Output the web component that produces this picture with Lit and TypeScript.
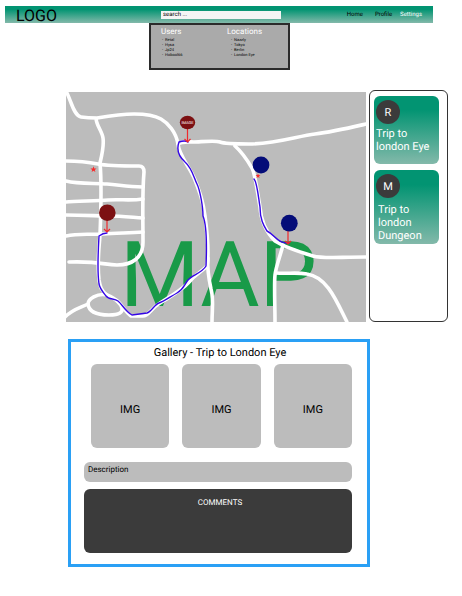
import { LitElement, html, css, svg } from "lit";
import { customElement } from "lit/decorators.js";

const roads: string[] = [
  "M67 93C71 101 74 116 81 117S90 118 97 118C109 116 122 114 134 114S154 115 161 119S176 132 178 144C179 156 190 167 195 180S203 201 205 216S209 255 207 266C200 273 195 275 190 281S170 297 160 303S149 316 143 316H131C125 312 122 304 116 300S107 295 107 295C101 291 100 286 99 280C97 262 99 250 100 235C101 210 102 185 100 163C102 155 104 145 103 138S96 125 96 118",
  "M178 144C182 141 188 142 194 142S215 140 220 142S240 144 249 144C275 144 298 136 315 134S353 127 366 124",
  "M235 146C243 153 249 163 252 168S257 190 260 207C261 222 268 234 275 241C286 248 303 253 313 256S338 257 366 257",
  "M283 245C280 257 276 266 275 275S275 305 275 322",
  "M276 273C288 274 296 272 307 274C327 277 336 300 347 322",
  "M66 161C77 161 88 162 98 164S120 166 139 166Q144 166 144 172C142 195 143 220 143 242C143 258 132 265 117 265C105 265 100 261 69 262",
  "M66 181C78 184 94 183 107 184S127 187 143 187",
  "M66 202C75 201 96 201 108 200S130 201 143 199",
  "M66 215C82 215 101 216 110 216S129 217 143 218",
  "M66 236C79 233 91 235 103 234S127 233 143 232",
  "M107 295C97 293 88 299 88 304C89 313 98 315 109 315S123 312 122 308S118 302 116 300",
  "M65 317C73 309 80 308 88 304",
  "M208 258C207 270 209 280 211 289C214 300 212 309 212 322",
];

const routes: string[] = [
  "M188 142Q185 140 179 142Q175 153 185 162C192 168 194 178 197 184S203 207 203 216C207 226 207 243 206 266C202 273 192 275 188 280S184 289 177 293S163 302 159 303S151 312 147 313L132 315C125 311 122 304 118 301S109 300 106 296S100 289 99 284C97 270 98 253 99 236Q103 233 107 233",
  "M254 179C257 182 258 194 260 207C260 220 264 226 267 231C275 235 278 244 289 243",
];

const star = (x: number, y: number, r: number) => {
  const points = Array.from({ length: 10 }, (_, i) => {
    const radius = i % 2 ? r * 0.42 : r;
    const angle = (i * Math.PI) / 5 - Math.PI / 2;
    return `${x + radius * Math.cos(angle)},${y + radius * Math.sin(angle)}`;
  }).join(" ");
  return svg`<polygon class="red" points=${points}></polygon>`;
};

const arrow = (x: number, from: number, to: number) =>
  svg`<path class="arrow" d=${`M${x} ${from}V${to}M${x - 3} ${to - 3}L${x} ${to}L${x + 3} ${to - 3}`}></path>`;

@customElement("trip-map")
export class TripMap extends LitElement {
  static styles = css`
    :host { display: block; }
    svg { display: block; width: 100%; height: auto; background: #bcbcbc; overflow: visible; }
    .title { font: 91px Roboto, sans-serif; fill: #199a48; }
    .road { fill: none; stroke: #fff; stroke-width: 3.6; stroke-linecap: round; }
    .route { fill: none; stroke: #3506e6; stroke-width: 1.4; stroke-linecap: round; }
    .arrow { fill: none; stroke: #f0282c; stroke-width: 1.2; }
    .red { fill: #fa2a2a; }
    .maroon { fill: #7c1012; }
    .navy { fill: #040c78; }
    .tag { font: 4px Roboto, sans-serif; fill: #fff; text-anchor: middle; }
  `;

  render() {
    return html`
      <svg viewBox="66 92 300 230" role="img" aria-label="Trip map">
        <text class="title" x="120" y="306">MAP</text>
        ${roads.map((d) => svg`<path class="road" d=${d}></path>`)}
        ${routes.map((d) => svg`<path class="route" d=${d}></path>`)}
        ${arrow(187.5, 128, 142)} ${arrow(107, 220, 232)} ${arrow(288, 231, 244)}
        <ellipse class="maroon" cx="187.5" cy="122.5" rx="7.7" ry="6.7"></ellipse>
        <text class="tag" x="187.5" y="124">IMAGE</text>
        <circle class="maroon" cx="107.3" cy="212.7" r="8.3"></circle>
        <circle class="navy" cx="261" cy="165" r="8.4"></circle>
        <circle class="navy" cx="289.3" cy="223.2" r="8.4"></circle>
        ${star(93.5, 169.5, 3.2)} ${star(258, 176, 2.6)}
      </svg>
    `;
  }
}

@customElement("app-root")
export class AppRoot extends LitElement {
  static styles = css`
    :host { display: block; padding: 6px 0 30px; background: #fff; color: #000; font-family: Roboto, sans-serif; text-rendering: geometricPrecision; }
    * { box-sizing: border-box; }
    h1, h2, h3, p, ul { margin: 0; padding: 0; font-weight: 400; }
    ul { list-style: none; }
    a { color: inherit; text-decoration: none; }
    .bar { display: flex; align-items: center; height: 17px; margin: 0 29px 0 5px; padding: 0 11px; background: linear-gradient(#029472 20%, #83b9aa); }
    .logo { width: 145px; font-size: 16px; line-height: 17px; padding-top: 2px; }
    .search { position: relative; width: 120px; }
    .field { display: block; width: 100%; height: 8px; padding: 0 2px; border: 0; border-radius: 0; background: #f5f5f5; color: #000; font: 6px/8px Roboto, sans-serif; text-rendering: inherit; outline: 0; }
    .field::placeholder { color: #000; opacity: 1; }
    .results { position: absolute; z-index: 1; top: 12px; left: -12px; display: flex; width: 141px; height: 47px; padding: 3px 10px; border: 2px solid #2b2b2b; background: #aaa; }
    .group { flex: none; width: 66px; }
    .group h2 { color: #fff; font-size: 8px; line-height: 8px; }
    .group ul { padding: 1px 0 0 1px; font-size: 4px; line-height: 5px; }
    .group + .group ul { padding-left: 4px; }
    .group li { display: flex; gap: 2px; }
    .group li::before { content: "-"; }
    nav { display: flex; gap: 12px; margin-left: auto; font-size: 6px; line-height: 8px; }
    .current { margin-left: -4px; color: #fff; }
    main { padding-top: 67px; }
    .plan { display: flex; gap: 3px; margin: 0 14px 0 66px; }
    trip-map { flex: 1; margin-top: 2px; }
    aside { display: flex; flex-direction: column; gap: 6px; width: 79px; padding: 5px 4px; border: 1px solid #333; border-radius: 6px; }
    .trip { display: block; width: 65px; min-height: 68px; padding: 4px 2px 2px; border-radius: 6px; background: linear-gradient(#029472 20%, #83b9aa); color: #fff; font-size: 11px; line-height: 13px; }
    .name { display: block; padding-top: 3px; }
    .long .name { padding: 5px 0 0 2px; }
    .avatar { display: grid; place-items: center; width: 24px; height: 24px; border-radius: 50%; background: #3b3b3b; }
    .gallery { margin: 17px 92px 0 68px; padding: 4px 15px 11px 13px; border: 3px solid #2aa0f5; }
    .gallery h2 { padding-left: 4px; font-size: 11px; line-height: 14px; text-align: center; }
    .images { display: grid; grid-template-columns: repeat(3, 1fr); gap: 13px; padding: 4px 0 14px 7px; }
    .image { display: grid; place-items: center; height: 84px; padding-top: 6px; border-radius: 6px; background: #bcbcbc; font-size: 11px; }
    .description { height: 20px; padding: 2px 4px; border-radius: 6px; background: #bcbcbc; font-size: 8px; line-height: 12px; }
    .comments { height: 64px; margin-top: 7px; padding-top: 8px; border-radius: 6px; background: #3b3b3b; color: #fff; text-align: center; }
    .comments h3 { padding-left: 4px; font-size: 8px; line-height: 12px; }
  `;

  private groups = [
    { name: "Users", items: ["Retal", "Hysa", "Jp24", "Hobool66"] },
    { name: "Locations", items: ["Nazzly", "Tokyo", "Berlin", "London Eye"] },
  ];

  render() {
    return html`
      <header class="bar">
        <h1 class="logo">LOGO</h1>
        <div class="search">
          <input class="field" type="search" aria-label="Search" placeholder="search ..." />
          <div class="results">
            ${this.groups.map((g) => html`
              <section class="group">
                <h2>${g.name}</h2>
                <ul>${g.items.map((item) => html`<li>${item}</li>`)}</ul>
              </section>
            `)}
          </div>
        </div>
        <nav>
          <a href="#home">Home</a><a href="#profile">Profile</a><a class="current" href="#settings">Settings</a>
        </nav>
      </header>
      <main>
        <div class="plan">
          <trip-map></trip-map>
          <aside>
            <a class="trip" href="#eye"><span class="avatar">R</span><span class="name">Trip to london Eye</span></a>
            <a class="trip long" href="#dungeon"><span class="avatar">M</span><span class="name">Trip to london Dungeon</span></a>
          </aside>
        </div>
        <section class="gallery">
          <h2>Gallery - Trip to London Eye</h2>
          <div class="images">
            ${[1, 2, 3].map(() => html`<div class="image">IMG</div>`)}
          </div>
          <p class="description">Description</p>
          <section class="comments"><h3>COMMENTS</h3></section>
        </section>
      </main>
    `;
  }
}
